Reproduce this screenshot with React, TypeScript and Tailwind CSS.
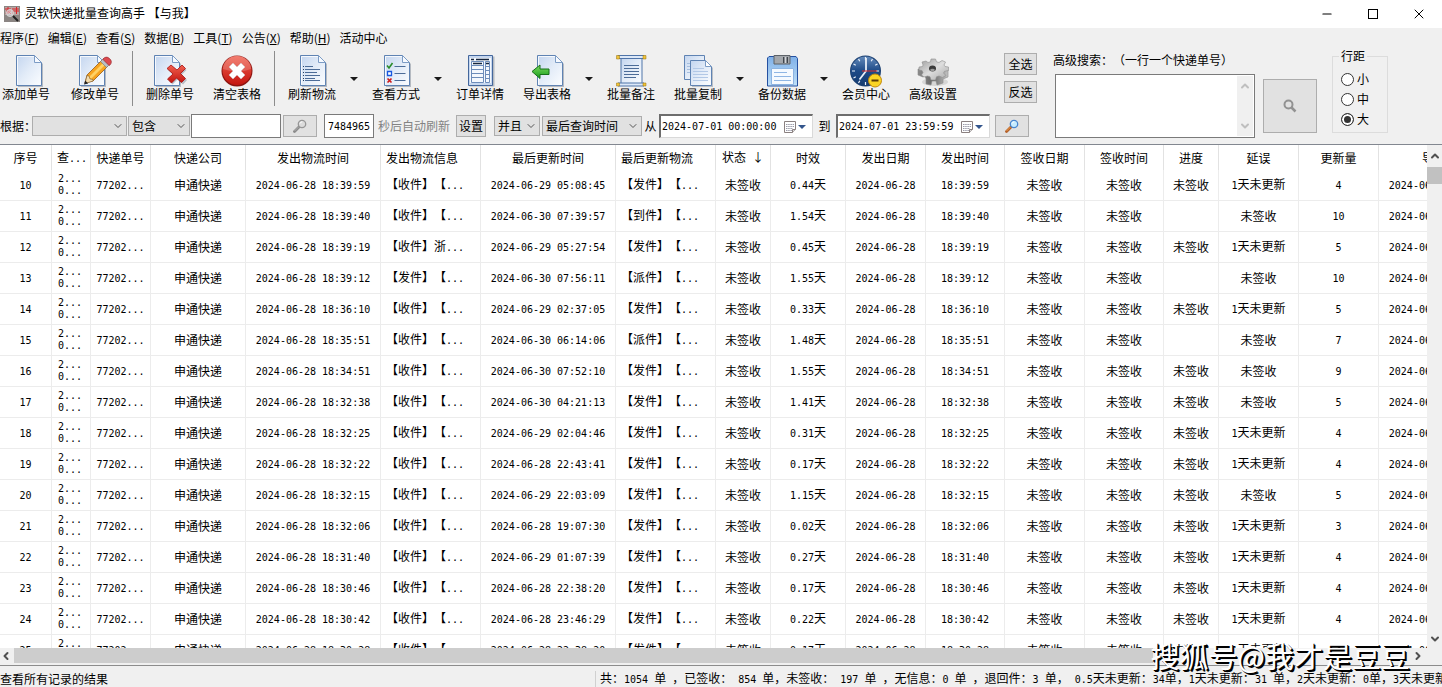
import React, { useState } from 'react';
import { ChevronDown, ChevronLeft, ChevronRight, ChevronUp, Minus, X } from 'lucide-react';

const columns = [
  { label: '序号', width: 'w-[52px]' },
  { label: '查...', width: 'w-[39px]', left: true },
  { label: '快递单号', width: 'w-[60px]' },
  { label: '快递公司', width: 'w-[95px]' },
  { label: '发出物流时间', width: 'w-[135px]' },
  { label: '发出物流信息', width: 'w-[100px]', left: true },
  { label: '最后更新时间', width: 'w-[135px]' },
  { label: '最后更新物流', width: 'w-[100px]', left: true },
  { label: '状态 ↓', width: 'w-[55px]' },
  { label: '时效', width: 'w-[75px]' },
  { label: '发出日期', width: 'w-[80px]' },
  { label: '发出时间', width: 'w-[79px]' },
  { label: '签收日期', width: 'w-[80px]' },
  { label: '签收时间', width: 'w-[79px]' },
  { label: '进度', width: 'w-[55px]' },
  { label: '延误', width: 'w-[80px]' },
  { label: '更新量', width: 'w-[80px]' },
  { label: '导入时间', width: 'w-[135px]' },
];

const LATE = '1天未更新';
const NONE = '未签收';

// 序号, 发出时间, 发出信息, 更新时间, 更新物流, 时效, 进度, 延误, 更新量
const rows = [
  ['10', '18:39:59', '【收件】【...', '2024-06-29 05:08:45', '【发件】【...', '0.44天', NONE, LATE, '4'],
  ['11', '18:39:40', '【收件】【...', '2024-06-30 07:39:57', '【到件】【...', '1.54天', '', NONE, '10'],
  ['12', '18:39:19', '【收件】浙...', '2024-06-29 05:27:54', '【发件】【...', '0.45天', NONE, LATE, '5'],
  ['13', '18:39:12', '【发件】【...', '2024-06-30 07:56:11', '【派件】【...', '1.55天', '', NONE, '10'],
  ['14', '18:36:10', '【收件】【...', '2024-06-29 02:37:05', '【发件】【...', '0.33天', NONE, LATE, '5'],
  ['15', '18:35:51', '【收件】【...', '2024-06-30 06:14:06', '【派件】【...', '1.48天', '', NONE, '7'],
  ['16', '18:34:51', '【收件】【...', '2024-06-30 07:52:10', '【发件】【...', '1.55天', NONE, NONE, '9'],
  ['17', '18:32:38', '【收件】【...', '2024-06-30 04:21:13', '【发件】【...', '1.41天', NONE, NONE, '5'],
  ['18', '18:32:25', '【收件】【...', '2024-06-29 02:04:46', '【发件】【...', '0.31天', NONE, LATE, '4'],
  ['19', '18:32:22', '【收件】【...', '2024-06-28 22:43:41', '【发件】【...', '0.17天', NONE, LATE, '4'],
  ['20', '18:32:15', '【收件】【...', '2024-06-29 22:03:09', '【发件】【...', '1.15天', NONE, NONE, '5'],
  ['21', '18:32:06', '【收件】【...', '2024-06-28 19:07:30', '【发件】【...', '0.02天', NONE, LATE, '3'],
  ['22', '18:31:40', '【收件】【...', '2024-06-29 01:07:39', '【发件】【...', '0.27天', NONE, LATE, '4'],
  ['23', '18:30:46', '【收件】【...', '2024-06-28 22:38:20', '【发件】【...', '0.17天', NONE, LATE, '4'],
  ['24', '18:30:42', '【收件】【...', '2024-06-28 23:46:29', '【发件】【...', '0.22天', NONE, LATE, '4'],
  ['25', '18:30:28', '【收件】【...', '2024-06-28 22:38:20', '【发件】【...', '0.17天', NONE, LATE, '4'],
];

const menus = [
  ['程序', 'F'], ['编辑', 'E'], ['查看', 'S'], ['数据', 'B'],
  ['工具', 'T'], ['公告', 'X'], ['帮助', 'H'], ['活动中心', ''],
];

function Mixed({ text }: { text: string }) {
  return (
    <>
      {text.split(/([\x20-\x7e]+)/).map((part, i) =>
        i % 2 ? <span key={i} className="font-['DejaVu_Sans_Mono',monospace] text-[10px]">{part}</span> : part
      )}
    </>
  );
}

function Page({ x = 4 }: { x?: number }) {
  return (
    <g transform={`translate(${x} 0)`}>
      <path d="M2 2h18l7 7v23H2z" fill="#6c7787" opacity=".45" />
      <path d="M.5.5h18l7 7v23H.5z" fill="url(#page)" stroke="#5f83b3" />
      <path d="M1.5 29.5v-28h16.6" fill="none" stroke="#fff" opacity=".8" />
      <path d="M18.5.5v7h7z" fill="#f7faff" stroke="#7c9cc5" strokeLinejoin="round" />
    </g>
  );
}

function Icon({ name }: { name: string }) {
  return (
    <svg viewBox="0 0 32 32" className="h-8 w-8 shrink-0 overflow-visible">
      {name === 'add' && <Page x={6} />}
      {name === 'edit' && (
        <>
          <Page x={0} />
          <path d="M6 28l2-8L23 5l6 6-15 15z" fill="#f6a31f" stroke="#9c5a10" strokeWidth=".8" />
          <path d="M10 22L25 7l2 2-15 15z" fill="#ffd164" />
          <path d="M6 28.5l2-8 2 .5 1 3 3 .5v1.500z" fill="#f3dcae" stroke="#6b4a1c" strokeWidth=".5" />
          <path d="M5 29.500l1.200-4 3 3z" fill="#222" />
          <path d="M21.500 6.500l3-3 6 6-3 3z" fill="#b9bec4" stroke="#71767c" strokeWidth=".6" />
          <path d="M24 4q3-3.500 6.500-.5t.5 6.500l-1 .5-6-6z" fill="#dc4a4f" stroke="#8e2227" strokeWidth=".6" />
        </>
      )}
      {name === 'delete' && (
        <>
          <Page x={0} />
          <path d="M13 14l4-3.500 6 5 5-5 3.500 3.500-5 5 5.500 5-4 4.500-5.500-5-5 5-4-4 5.500-5z" fill="#7e8a99" opacity=".5" transform="translate(1 1)" />
          <path d="M13 13.500l4-3.500 6 5 5-5 3.500 3.500-5 5 5 5-4 4-5-4.500-5 5-4-4 5.500-5z" fill="url(#red)" stroke="#a80d0d" strokeWidth=".8" />
        </>
      )}
      {name === 'clear' && (
        <>
          <circle cx="16" cy="16" r="15.500" fill="#8d1410" />
          <circle cx="16" cy="15.500" r="14.500" fill="url(#red)" />
          <path d="M2 14a14 13.500 0 0 1 28 0q-13 5-28 0z" fill="#fff" opacity=".18" />
          <path d="M8 12l4-4 4 4 4-4 4 4-4 4 4 4-4 4-4-4-4 4-4-4 4-4z" fill="#fff" stroke="#c9c9c9" strokeWidth=".5" />
        </>
      )}
      {name === 'refresh' && (
        <>
          <Page />
          <g stroke="#4c6c98">
            <path d="M9 11.500h8M9 14.500h15M9 17.500h12M9 20.500h15M9 23.500h10M9 25.500h15" />
            <path d="M7 11.500h1M7 14.500h1M7 17.500h1M7 20.500h1M7 23.500h1M7 25.500h1" stroke="#27405f" />
          </g>
        </>
      )}
      {name === 'view' && (
        <>
          <Page />
          <path d="M7 10.500l2 2.500 3.500-5" fill="none" stroke="#2a8c2a" strokeWidth="1.600" />
          <path d="M7.500 16.500h4v4h-4z" fill="#fff" stroke="#1757e0" strokeWidth="1.300" />
          <path d="M7.500 23.500l4 4m0-4l-4 4" stroke="#cf1b1b" strokeWidth="1.700" />
          <path d="M14.500 11.500h11M14.500 18.500h11M14.500 25.500h11" stroke="#4c6c98" />
        </>
      )}
      {name === 'detail' && (
        <>
          <path d="M5.500 1.500h25v30h-25z" fill="#6c7787" opacity=".45" />
          <path d="M4.500.5h24v30h-24z" fill="#c6d7ef" stroke="#44679c" />
          <path d="M6 3h21v25H6z" fill="#f4f8fe" />
          <path d="M7 4.500h3M12 4.500h13M9 8.500h9M22 8.500h3" stroke="#15253d" strokeWidth="1.300" />
          <path d="M7.500 6.500h12v21h-12zM21.500 6.500h4v21h-4zM8 10.500h11M8 14.500h11M8 18.500h11M8 22.500h11M22 11.500h3M22 15.500h3M22 19.500h3M22 23.500h3" fill="none" stroke="#6c8cba" />
        </>
      )}
      {name === 'export' && (
        <>
          <Page x={6} />
          <path d="M1 16.500L9 10v4h9v5.500H9v4z" fill="url(#green)" stroke="#17701a" />
        </>
      )}
      {name === 'note' && (
        <>
          <path d="M6 3h21v26H6z" fill="url(#page)" stroke="#4f74a8" />
          <path d="M3 .5h26v3H3zM3 28h26v3H3z" fill="#dce8f8" stroke="#4f74a8" />
          <path d="M1.500.5h3v3.500h-3zM28 .5h3V4h-3zM1.500 28h3v3h-3zM28 28h3v3h-3z" fill="#f0c33a" stroke="#96700f" strokeWidth=".5" />
          <path d="M9 10.500h15M9 13.500h15M9 16.500h15M9 19.500h15M9 22.500h12" stroke="#4c6c98" />
        </>
      )}
      {name === 'copy' && (
        <>
          <path d="M2.500.5h20v24h-20z" fill="url(#page)" stroke="#5f83b3" />
          <path d="M5 8.500h4M5 11.500h4M5 14.500h4M5 17.500h4" stroke="#a5bedf" />
          <path d="M10 7h15l6 6v19H10z" fill="#6c7787" opacity=".4" />
          <path d="M8.500 5.500h15l6 6v19h-21z" fill="url(#page)" stroke="#5f83b3" />
          <path d="M23.500 5.500v6h6z" fill="#fff" stroke="#7c9cc5" />
          <path d="M11 13.500h11M11 16.500h15M11 19.500h15M11 22.500h15M11 25.500h15" stroke="#b2c8e6" />
        </>
      )}
      {name === 'save' && (
        <>
          <path d="M3 1.500h27l1.500 2v27.500h-30v-28z" fill="url(#disk)" stroke="#2550a0" />
          <path d="M8 .5h16v8.500H8z" fill="#a3a7ac" stroke="#5d6268" />
          <path d="M17 2h5v6h-5z" fill="#3f454c" />
          <path d="M18.500 2h2v6h-2z" fill="#d2d5d9" />
          <path d="M5.500 13.500h22v16h-22z" fill="#f5faff" stroke="#8db4e2" />
          <path d="M8 17.500h13M8 21.500h17M8 25.500h17" stroke="#8fb6e4" />
        </>
      )}
      {name === 'member' && (
        <>
          <circle cx="15.500" cy="16" r="15.500" fill="#1d4172" />
          <circle cx="15.500" cy="16" r="14.500" fill="url(#clock)" />
          <g stroke="#e8eff8" strokeWidth="1.200">
            <path d="M15.500 2v3M15.500 27v3M2 16h3M26 16h3M8.500 4l1.300 2.300M22.500 4l-1.300 2.300M3.500 9l2.300 1.300M27.500 9l-2.300 1.300M3.500 23l2.300-1.300M8.500 28l1.300-2.300" />
            <path d="M16 3v13l-6.500 8.500" fill="none" strokeWidth="1.800" />
          </g>
          <path d="M12 16h15" stroke="#dc2b2b" />
          <circle cx="25" cy="25.500" r="6.500" fill="#fbd424" stroke="#c38a0c" />
          <path d="M21.500 25.500h7" stroke="#5b3a05" strokeWidth="2" />
        </>
      )}
      {name === 'settings' && (
        <>
          <ellipse cx="18" cy="27" rx="13" ry="4" fill="#9a9a9a" opacity=".3" />
          <path d="M1 14v6l5 2 2-1 1 3v5l5 1 1-4h4l1 4 6-2v-4l5-2v-7z" fill="url(#gearSide)" stroke="#8c8c8c" strokeWidth=".6" />
          <path d="M5 7l4-1 2 1.500 2.500-.8L14 4h4.500l1 2.800 2.500.7L25 5.500l3.500 1.500-1.500 3 1 1.500 3.500.5v3.500l-4 .8-1 1.700 2.500 2.500-3.500 2-3.500-1.500-2.500.8-1 3.200h-4.500l-1-3.200-2.500-.8-3.500 1-2.500-2 1.500-2.500-1-2-3-.5V12l3.500-.5.5-1.500z" fill="url(#gear)" stroke="#8f8f8f" strokeWidth=".6" />
          <ellipse cx="15.500" cy="13.500" rx="3.500" ry="3" fill="#3a3a3a" />
          <ellipse cx="15.500" cy="15" rx="2.300" ry="1.300" fill="#9a9a9a" />
        </>
      )}
    </svg>
  );
}

function Lens({ colored = false }: { colored?: boolean }) {
  return (
    <svg viewBox="0 0 14 14" className="h-[14px] w-[14px]">
      <path d="M1.500 12.500L6 8" stroke={colored ? '#b4602a' : '#8a8a8a'} strokeWidth="2.800" strokeLinecap="round" />
      <path d="M1.500 12L5.500 8" stroke={colored ? '#f0a04a' : '#b0b0b0'} />
      <circle cx="9" cy="5" r="3.700" fill={colored ? '#c6ecff' : '#dcdcdc'} stroke={colored ? '#4a86cf' : '#969696'} strokeWidth="1.300" />
      <path d="M7 4.500q.5-1.700 2.300-1.700" fill="none" stroke="#fff" />
    </svg>
  );
}

const tools = [
  { icon: 'add', label: '添加单号', tail: 'wide' },
  { icon: 'edit', label: '修改单号', tail: 'line' },
  { icon: 'delete', label: '删除单号', tail: 'gap' },
  { icon: 'clear', label: '清空表格', tail: 'line' },
  { icon: 'refresh', label: '刷新物流', tail: 'caret' },
  { icon: 'view', label: '查看方式', tail: 'caret' },
  { icon: 'detail', label: '订单详情', tail: 'gap' },
  { icon: 'export', label: '导出表格', tail: 'caret' },
  { icon: 'note', label: '批量备注', tail: 'gap' },
  { icon: 'copy', label: '批量复制', tail: 'caret' },
  { icon: 'save', label: '备份数据', tail: 'caret' },
  { icon: 'member', label: '会员中心', tail: 'gap' },
  { icon: 'settings', label: '高级设置', tail: '' },
];

function Tail({ kind, label }: { kind: string; label: string }) {
  if (kind === 'wide') return <span className="w-[21px] shrink-0" />;
  if (kind === 'gap') return <span className="w-[19px] shrink-0" />;
  if (kind === 'line') {
    return (
      <span className="flex w-[27px] shrink-0 justify-center">
        <span className="h-[55px] w-px bg-[#8c8c8c]" />
      </span>
    );
  }
  if (kind === 'caret') {
    return (
      <button aria-label={label + '菜单'} className="flex h-[55px] w-9 shrink-0 items-center justify-center">
        <svg viewBox="0 0 8 4" className="h-1 w-2"><path d="M0 0h8L4 4z" fill="#1a1a1a" /></svg>
      </button>
    );
  }
  return null;
}

function Picker({ options, label, width }: { options: string[]; label: string; width: string }) {
  return (
    <span className={'relative flex h-5 shrink-0 ' + width}>
      <select aria-label={label} className="h-full w-full appearance-none border border-[#adadad] bg-[#e1e1e1] pl-[3px] leading-none outline-none">
        {options.map((o) => <option key={o}>{o}</option>)}
      </select>
      <ChevronDown className="pointer-events-none absolute top-1 right-[3px] h-3 w-3 text-[#555]" strokeWidth={2} />
    </span>
  );
}

function DateBox({ label, value }: { label: string; value: string }) {
  return (
    <span className="flex h-6 w-[154px] shrink-0 items-center border border-t-2 border-l-2 border-[#d9d9d9] border-t-[#6d6d6d] border-l-[#6d6d6d] bg-white">
      <input aria-label={label} defaultValue={value} className="w-[123px] bg-transparent pl-px font-['DejaVu_Sans_Mono',monospace] text-[10px] outline-none" />
      <button aria-label={label + '日历'} className="flex items-center gap-0.5">
        <svg viewBox="0 0 12 12" className="h-3 w-3">
          <path d="M.5.5h11v8l-3 3h-8z" fill="#fff" stroke="#8a8080" />
          <path d="M2 3.500h8M2 5.500h8M2 7.500h7M2 9.500h6" stroke="#9a9aa8" strokeDasharray="1.500 .7" />
          <path d="M8.500 11.500v-3h3" fill="#ddd" stroke="#8a8080" />
        </svg>
        <svg viewBox="0 0 8 4" className="h-1 w-2"><path d="M0 0h8L4 4z" fill="#33558c" /></svg>
      </button>
    </span>
  );
}

function AppLogo() {
  return (
    <svg viewBox="0 0 16 16" className="h-4 w-4">
      <path d="M0 0h16v16H0z" fill="#8b8583" />
      <path d="M1 1h14v8H1z" fill="#b9a6a4" />
      <path d="M1 3h6M4 1v7M2 5h5M2 8l2-3 3 3M9 2v6M10 3h5M12.500 1v7M10 5h5" stroke="#d8252b" fill="none" />
      <circle cx="6" cy="7" r="3.500" fill="#e8f0f5" fillOpacity=".5" stroke="#d5d5d5" />
      <path d="M9 10l5 5" stroke="#222" strokeWidth="2" />
    </svg>
  );
}

const grayButton = 'flex shrink-0 items-center justify-center border border-[#adadad] bg-[#e1e1e1]';

export default function App() {
  const [spacing, setSpacing] = useState('大');

  return (
    <div className="relative flex h-screen flex-col overflow-hidden bg-[#f0f0f0] font-['Noto_Sans_CJK_SC',sans-serif] text-xs leading-[14px] text-black [text-spacing-trim:space-all]">
      <svg className="absolute h-0 w-0" aria-hidden="true">
        <defs>
          <linearGradient id="page" x1="0" y1="0" x2="1" y2="1">
            <stop offset="0" stopColor="#c3d5ef" />
            <stop offset=".5" stopColor="#e3ecf8" />
            <stop offset="1" stopColor="#fbfdff" />
          </linearGradient>
          <linearGradient id="red" x1="0" y1="0" x2="0" y2="1">
            <stop offset="0" stopColor="#f0604f" />
            <stop offset="1" stopColor="#c4150f" />
          </linearGradient>
          <linearGradient id="green" x1="0" y1="0" x2="0" y2="1">
            <stop offset="0" stopColor="#7ddb5f" />
            <stop offset="1" stopColor="#159c1b" />
          </linearGradient>
          <linearGradient id="disk" x1="0" y1="0" x2="0" y2="1">
            <stop offset="0" stopColor="#7fb0e8" />
            <stop offset="1" stopColor="#bfe0f8" />
          </linearGradient>
          <linearGradient id="clock" x1="0" y1="0" x2="0" y2="1">
            <stop offset="0" stopColor="#6289ba" />
            <stop offset=".5" stopColor="#1d4a87" />
            <stop offset="1" stopColor="#153b70" />
          </linearGradient>
          <linearGradient id="gear" x1="0" y1="0" x2="1" y2="1">
            <stop offset="0" stopColor="#9a9a9a" />
            <stop offset=".5" stopColor="#dedede" />
            <stop offset="1" stopColor="#a8a8a8" />
          </linearGradient>
          <linearGradient id="gearSide" x1="0" y1="0" x2="1" y2="0">
            <stop offset="0" stopColor="#8a8a8a" />
            <stop offset=".5" stopColor="#6a6a6a" />
            <stop offset="1" stopColor="#c4c4c4" />
          </linearGradient>
        </defs>
      </svg>

      <header className="flex h-7 shrink-0 items-center bg-white pl-1">
        <AppLogo />
        <h1 className="ml-[5px] flex-1 pb-1 pt-0.5">灵软快递批量查询高手 【与我】</h1>
        <button aria-label="最小化" className="flex w-[46px] justify-center"><Minus className="h-[14px] w-[14px]" strokeWidth={2} /></button>
        <button aria-label="最大化" className="flex w-[46px] justify-center"><span className="h-[10px] w-[10px] border border-black" /></button>
        <button aria-label="关闭" className="flex w-[46px] justify-center"><X className="h-4 w-4" strokeWidth={1.5} /></button>
      </header>

      <nav className="flex h-5 shrink-0 items-center gap-[9px]">
        {menus.map(([name, key]) => (
          <button key={name}>
            {name}{key && <>(<u>{key}</u>)</>}
          </button>
        ))}
      </nav>

      <section className="flex h-24 shrink-0 items-start">
        <div className="flex shrink-0 flex-col">
          <div className="flex h-[66px] items-start pt-[3px] pl-0.5">
            {tools.map((t) => (
              <React.Fragment key={t.label}>
                <button className="flex w-12 shrink-0 flex-col items-center pt-1 whitespace-nowrap">
                  <Icon name={t.icon} />
                  {t.label}
                </button>
                <Tail kind={t.tail} label={t.label} />
              </React.Fragment>
            ))}
            <div className="ml-auto flex flex-col gap-1.5 pt-0.5">
              <button className={grayButton + ' h-[22px] w-[33px]'}>全选</button>
              <button className={grayButton + ' h-[22px] w-[33px]'}>反选</button>
            </div>
          </div>
          <div className="flex h-6 w-[1037px] items-center">
            <span className="w-8 shrink-0 whitespace-nowrap">根据：</span>
            <Picker label="字段" options={['']} width="w-[95px]" />
            <Picker label="条件" options={['包含']} width="ml-px w-[62px]" />
            <input aria-label="关键字" className="ml-px h-6 w-[90px] shrink-0 border border-[#7a7a7a] bg-white px-1 outline-none" />
            <button aria-label="查询" className={grayButton + ' ml-0.5 h-[22px] w-[34px]'}><Lens /></button>
            <input id="seconds" defaultValue="7484965" className="ml-[7px] h-6 w-[50px] shrink-0 border border-[#7a7a7a] bg-white pl-[3px] font-['DejaVu_Sans_Mono',monospace] text-[10px] outline-none" />
            <label htmlFor="seconds" className="ml-1 shrink-0 text-[#838383]">秒后自动刷新</label>
            <button className={grayButton + ' ml-1.5 h-[22px] w-[30px]'}>设置</button>
            <Picker label="关系" options={['并且']} width="ml-2 w-[46px]" />
            <Picker label="时间字段" options={['最后查询时间']} width="ml-0.5 w-[100px]" />
            <span className="w-[17px] shrink-0 text-center">从</span>
            <DateBox label="开始时间" value="2024-07-01 00:00:00" />
            <span className="w-[23px] shrink-0 text-center">到</span>
            <DateBox label="结束时间" value="2024-07-01 23:59:59" />
            <button aria-label="按时间查询" className={grayButton + ' ml-[5px] h-[22px] w-[34px]'}><Lens colored /></button>
          </div>
        </div>

        <div className="ml-4 flex shrink-0 flex-col pt-[5px]">
          <label htmlFor="numbers">高级搜索：（一行一个快递单号）</label>
          <div className="mt-[7px] ml-0.5 flex h-16 w-[200px] border border-[#7a7a7a] bg-white p-px">
            <textarea id="numbers" className="flex-1 resize-none overflow-hidden outline-none" />
            <span className="flex w-4 flex-col items-center justify-between bg-[#f0f0f0] py-1 text-[#bfbfbf]">
              <ChevronUp className="h-3 w-3" strokeWidth={4} />
              <ChevronDown className="h-3 w-3" strokeWidth={4} />
            </span>
          </div>
        </div>
        <button aria-label="高级搜索" className={grayButton + ' mt-[31px] ml-2 h-[54px] w-[54px]'}>
          <svg viewBox="0 0 14 14" className="h-[14px] w-[14px]">
            <circle cx="5.500" cy="5.500" r="4" fill="none" stroke="#929292" strokeWidth="2" />
            <path d="M8.500 8.500l4 4" stroke="#929292" strokeWidth="2.500" />
          </svg>
        </button>
        <fieldset className="mt-px ml-[15px] h-[84px] w-14 shrink-0 border border-[#dcdcdc] pl-2">
          <legend className="-ml-0.5 px-0.5">行距</legend>
          <div className="flex flex-col gap-1.5 pt-[9px]">
            {['小', '中', '大'].map((s) => (
              <label key={s} className="flex items-center gap-[3px]">
                <input
                  type="radio"
                  name="spacing"
                  checked={spacing === s}
                  onChange={() => setSpacing(s)}
                  className="h-[13px] w-[13px] appearance-none rounded-full border border-[#333] bg-white checked:bg-[#333] checked:shadow-[inset_0_0_0_2px_white]"
                />
                {s}
              </label>
            ))}
          </div>
        </fieldset>
      </section>

      <main className="flex min-h-0 flex-1 flex-col border-t border-b border-t-[#828790] border-b-[#8c8c8c]">
        <div className="flex min-h-0 flex-1">
          <div className="min-w-0 flex-1 overflow-hidden bg-white">
            <table className="w-[1514px] table-fixed border-separate border-spacing-0 whitespace-nowrap">
              <colgroup>
                {columns.map((c) => <col key={c.label} className={c.width} />)}
              </colgroup>
              <thead>
                <tr className="h-[25px]">
                  {columns.map((c) => (
                    <th key={c.label} className={'border-r border-[#e2e2e2] p-0 font-normal ' + (c.left ? 'pl-[5px] text-left' : 'text-center')}>
                      <Mixed text={c.label} />
                    </th>
                  ))}
                </tr>
              </thead>
              <tbody>
                {rows.map(([no, time, info, updated, last, age, progress, delay, count]) => {
                  const cells = [
                    no, '', '77202...', '申通快递', '2024-06-28 ' + time, info, updated, last, NONE,
                    age, '2024-06-28', time, NONE, NONE, progress, delay, count, '2024-06-28 18:39:59',
                  ];
                  return (
                    <tr key={no} className="h-[31px]">
                      {cells.map((cell, i) => (
                        <td key={i} className={'border-r border-b border-[#ececec] p-0 ' + (columns[i].left ? 'pl-[5px] text-left' : 'text-center')}>
                          {i === 1 ? (
                            <div className="pl-px font-['DejaVu_Sans_Mono',monospace] text-[10px] leading-3">2...<br />0...</div>
                          ) : (
                            <Mixed text={cell} />
                          )}
                        </td>
                      ))}
                    </tr>
                  );
                })}
              </tbody>
            </table>
          </div>
          <div className="flex w-[15px] shrink-0 flex-col items-center">
            <button aria-label="向上" className="flex h-[22px] items-center text-[#505050]"><ChevronUp className="h-3 w-3" strokeWidth={4} /></button>
            <div className="h-[17px] w-full bg-[#c1c1c1]" />
            <button aria-label="向下" className="mt-auto flex h-[18px] items-center text-[#505050]"><ChevronDown className="h-3 w-3" strokeWidth={4} /></button>
          </div>
        </div>
        <div className="flex h-[17px] shrink-0 items-start">
          <button aria-label="向左" className="flex h-[15px] w-[14px] shrink-0 items-center text-[#505050]"><ChevronLeft className="h-3 w-3" strokeWidth={4} /></button>
          <div className="h-[15px] w-[79%] bg-[#cdcdcd]" />
          <button aria-label="向右" className="mr-[18px] ml-auto flex h-[15px] items-center text-[#505050]"><ChevronRight className="h-3 w-3" strokeWidth={4} /></button>
        </div>
      </main>

      <footer className="flex h-[21px] shrink-0 items-center overflow-hidden pt-1 whitespace-pre">
        <span className="w-[595px] shrink-0">查看所有记录的结果</span>
        <span className="border-l border-[#d0d0d0] pl-1">
          <Mixed text="共：1054 单 ，已签收： 854 单，未签收： 197 单 ，无信息：0 单 ，退回件：3 单， 0.5天未更新：34单，1天未更新：31 单，2天未更新：0单，3天未更新" />
        </span>
      </footer>

      <div className="pointer-events-none absolute right-8 bottom-3 text-[29px] leading-10 text-white [text-shadow:1px_1px_0_#000,2px_2px_0_#000]">
        搜狐号@我才是豆豆
      </div>
    </div>
  );
}
